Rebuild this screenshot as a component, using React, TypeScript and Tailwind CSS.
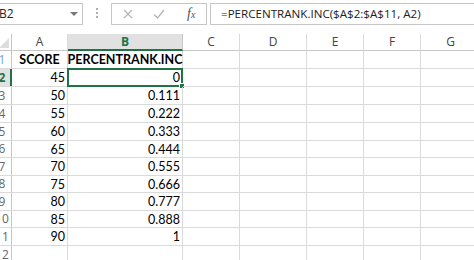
import React from "react";

// column layout of the visible sheet
const cols = [
  { key: "A", w: "w-[56px]" },
  { key: "B", w: "w-[115px]" },
  { key: "C", w: "w-[57px]" },
  { key: "D", w: "w-[67px]" },
  { key: "E", w: "w-[57px]" },
  { key: "F", w: "w-[57px]" },
  { key: "G", w: "w-[60px]" },
];

const rows = [
  { n: 1, h: "h-[18px]", a: "SCORE", b: "PERCENTRANK.INC", head: true },
  { n: 2, h: "h-[18px]", a: "45", b: "0" },
  { n: 3, h: "h-[18px]", a: "50", b: "0.111" },
  { n: 4, h: "h-[18px]", a: "55", b: "0.222" },
  { n: 5, h: "h-[18px]", a: "60", b: "0.333" },
  { n: 6, h: "h-[17px]", a: "65", b: "0.444" },
  { n: 7, h: "h-[18px]", a: "70", b: "0.555" },
  { n: 8, h: "h-[17px]", a: "75", b: "0.666" },
  { n: 9, h: "h-[18px]", a: "80", b: "0.777" },
  { n: 10, h: "h-[17px]", a: "85", b: "0.888" },
  { n: 11, h: "h-[18px]", a: "90", b: "1" },
  { n: 12, h: "h-[18px]", a: "", b: "" },
];

const cellFont = { fontFamily: "Lato, 'Liberation Sans', sans-serif" };
const uiFont = { fontFamily: "'Open Sans', 'Noto Sans', sans-serif" };

function FormulaBar() {
  return (
    <div className="flex h-[34px] items-start bg-white" style={uiFont}>
      <div className="-ml-[17px] mt-[3px] flex h-[22px] w-[100px] items-center border border-[#c6c6c6] bg-white pl-[15px]">
        <span className="text-[12px] leading-none text-[#222]">B2</span>
        <span className="ml-auto mr-[4px] h-0 w-0 border-x-[4px] border-t-[4px] border-x-transparent border-t-[#777]" />
      </div>
      <div className="ml-[13px] mt-[8px] flex flex-col gap-[2px]">
        <span className="h-[2px] w-[2px] bg-[#b0b0b0]" />
        <span className="h-[2px] w-[2px] bg-[#b0b0b0]" />
        <span className="h-[2px] w-[2px] bg-[#b0b0b0]" />
      </div>
      <div className="ml-[13px] mt-[3px] flex h-[22px] w-[96px] items-center border border-[#c6c6c6] bg-white">
        <svg className="ml-[11px]" width="10" height="10" viewBox="0 0 10 10">
          <path d="M1 1L9 9M9 1L1 9" stroke="#b4b4b4" strokeWidth="1.2" fill="none" />
        </svg>
        <svg className="ml-[20px]" width="12" height="10" viewBox="0 0 12 10">
          <path d="M1 5.5L4.5 9L11 1" stroke="#b4b4b4" strokeWidth="1.3" fill="none" />
        </svg>
        <span
          className="ml-[22px] text-[14px] italic leading-none text-[#555]"
          style={{ fontFamily: "'Liberation Serif', serif" }}
        >
          f<span className="text-[10px]">x</span>
        </span>
      </div>
      <div className="ml-[3px] mt-[3px] flex h-[22px] flex-1 items-center border border-r-0 border-[#c6c6c6] bg-white pl-[10px]">
        <span className="whitespace-nowrap text-[11.6px] leading-none text-[#222]">
          =PERCENTRANK.INC($A$2:$A$11, A2)
        </span>
      </div>
    </div>
  );
}

function RowHeader({ n, h }: { n: number; h: string }) {
  const sel = n === 2;
  return (
    <div
      className={`relative w-[12px] shrink-0 overflow-hidden border-b border-[#dadada] ${h} ${
        sel ? "bg-[#e1e1e1]" : "bg-white"
      }`}
    >
      <div
        className={`absolute inset-y-0 -left-[8px] flex w-[20px] items-center justify-center text-[12px] leading-none ${
          sel ? "font-bold text-[#217346]" : n === 1 ? "text-[#6fa3d8]" : "text-[#666]"
        }`}
        style={uiFont}
      >
        {n}
      </div>
      <div
        className={`absolute inset-y-0 right-0 ${sel ? "w-[2px] bg-[#217346]" : "w-px bg-[#c6c6c6]"}`}
      />
    </div>
  );
}

export default function App() {
  return (
    <div className="h-[260px] w-[474px] overflow-hidden bg-white">
      <FormulaBar />
      {/* column headers */}
      <div className="flex h-[17px]">
        <div className="relative w-[12px] shrink-0 border-b border-r border-[#c6c6c6] bg-white">
          <div className="absolute bottom-[2px] right-[2px] h-0 w-0 border-b-[10px] border-l-[10px] border-b-[#dcdcdc] border-l-transparent" />
        </div>
        {cols.map((c) => (
          <div
            key={c.key}
            className={`flex shrink-0 items-center justify-center border-r text-[12px] leading-none ${c.w} ${
              c.key === "B"
                ? "border-b-2 border-r-[#c6c6c6] border-b-[#217346] bg-[#e1e1e1] font-bold text-[#217346]"
                : "border-b border-[#dadada] border-b-[#c6c6c6] bg-white text-[#444]"
            }`}
            style={uiFont}
          >
            {c.key}
          </div>
        ))}
      </div>
      {/* sheet rows */}
      {rows.map((r) => (
        <div key={r.n} className="flex">
          <RowHeader n={r.n} h={r.h} />
          {cols.map((c) => {
            const val = c.key === "A" ? r.a : c.key === "B" ? r.b : "";
            const selected = r.n === 2 && c.key === "B";
            return (
              <div
                key={c.key}
                className={`relative flex shrink-0 items-center border-b border-r border-[#dadada] pt-[2px] leading-none text-black ${c.w} ${r.h} ${
                  r.head ? "justify-center text-[12.5px] font-bold" : "justify-end pr-[2px] text-[12.5px]"
                }`}
                style={cellFont}
              >
                {val}
                {selected && (
                  <>
                    <div className="pointer-events-none absolute -left-px -top-px -bottom-px -right-px border-2 border-[#217346]" />
                    <div className="absolute -bottom-[3px] -right-[3px] h-[6px] w-[6px] border border-white bg-[#217346]" />
                  </>
                )}
              </div>
            );
          })}
        </div>
      ))}
    </div>
  );
}
